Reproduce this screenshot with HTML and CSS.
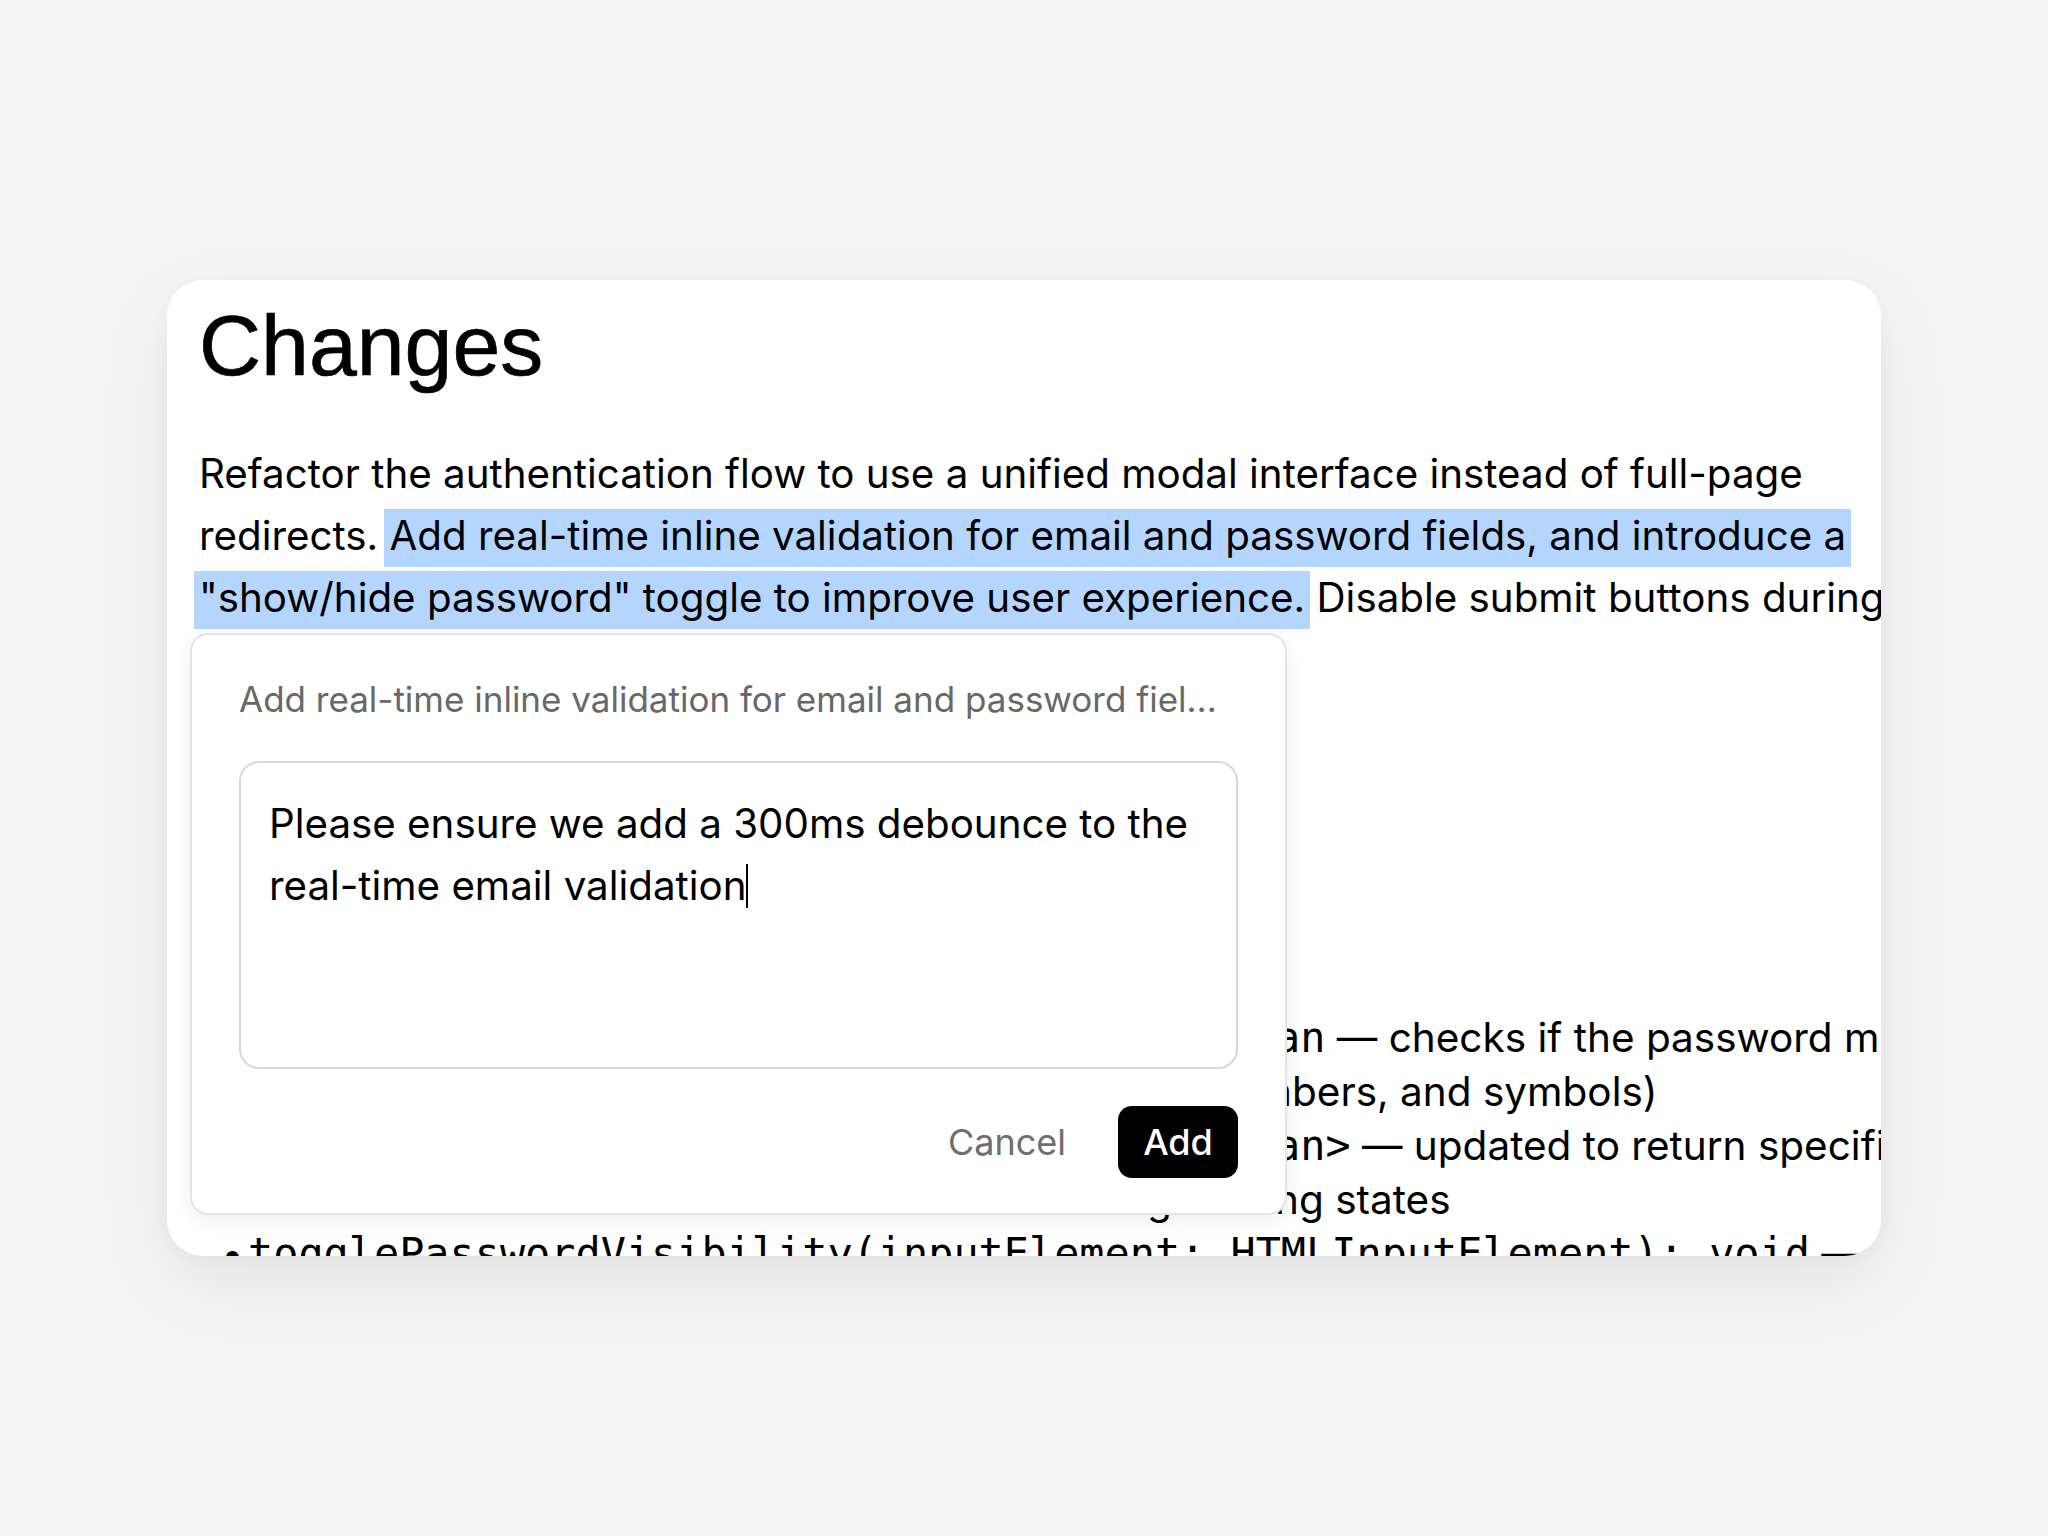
FILE: index.html
```html
<!DOCTYPE html>
<html lang="en">
<head>
<meta charset="utf-8">
<title>Changes</title>
<link rel="stylesheet" href="styles.css">
</head>
<body>
<div class="stage">
  <div class="card">
    <div class="doc">
      <h1 class="title">Changes</h1>
      <p class="para">Refactor the authentication flow to use a unified modal interface instead of full-page redirects. <span class="hl">Add real-time inline validation for email and password fields, and introduce a "show/hide password" toggle to improve user experience.</span> Disable submit buttons during loading.</p>
      <h2 class="sub">Functions</h2>
      <ul class="list">
        <li class="li">
          <div class="li-line"><span class="li-pre"><code class="mono">validatePassword(password: string): boole</code></span><span class="li-rest"><code class="mono">an</code> — checks if the password meets complexity rules</span></div>
          <div class="li-line"><span class="li-pre li-pre-wide">(minimum length, uppercase letters, num</span><span class="li-rest">bers, and symbols)</span></div>
        </li>
        <li class="li">
          <div class="li-line"><span class="li-pre"><code class="mono">validateEmail(email: string): Promise&lt;boole</code></span><span class="li-rest"><code class="mono">an&gt;</code> — updated to return specific error messages</span></div>
          <div class="li-line"><span class="li-pre">for invalid formats and during loadi</span><span class="li-rest">ng states</span></div>
        </li>
        <li class="li">
          <div class="li-line"><span class="li-rest"><code class="mono">togglePasswordVisibility(inputElement: HTMLInputElement): void</code> —</span></div>
          <div class="li-line"><span class="li-rest">shows or hides the password input value</span></div>
        </li>
      </ul>
    </div>

    <div class="popup">
      <div class="popup-quote">Add real-time inline validation for email and password fields, and introduce a "show/hide password" toggle</div>
      <div class="field">Please ensure we add a 300ms debounce to the real-time email validation<span class="caret"></span></div>
      <div class="actions">
        <button class="btn-cancel">Cancel</button>
        <button class="btn-add">Add</button>
      </div>
    </div>
  </div>
</div>
</body>
</html>
```

FILE: styles.css
```css
* { box-sizing: border-box; }

html, body {
  margin: 0;
  padding: 0;
}

body {
  background: #f5f5f5;
  font-family: "Inter", "Noto Sans", sans-serif;
  color: #000;
}

.stage {
  min-height: 100vh;
  display: flex;
  align-items: center;
  justify-content: center;
}

.card {
  position: relative;
  width: 1714px;
  height: 976px;
  background: #fff;
  border-radius: 36px;
  overflow: hidden;
  box-shadow: 0 26px 80px rgba(0, 0, 0, 0.075), 0 4px 16px rgba(0, 0, 0, 0.03);
}

.doc {
  padding: 22px 0 0 32px;
  width: 1760px;
}

.title {
  margin: 0;
  font-family: "Liberation Sans", Arial, sans-serif;
  font-weight: 400;
  font-size: 86px;
  line-height: 86px;
  -webkit-text-stroke: 0.7px #000;
}

.para {
  margin: 55px 0 0 0;
  font-size: 40.3px;
  line-height: 62px;
  width: 1700px;
}

.hl {
  background: #b4d5fe;
  padding: 2px 0 7px 0;
  -webkit-box-decoration-break: clone;
  box-decoration-break: clone;
  box-shadow: 5px 0 0 #b4d5fe, -5px 0 0 #b4d5fe;
}

.sub {
  margin: 40px 0 0 0;
  font-size: 48px;
  font-weight: 600;
  line-height: 60px;
}

.list {
  list-style: none;
  margin: 220px 0 0 0;
  padding: 0 0 0 49px;
  font-size: 40.5px;
  line-height: 54px;
}

.li {
  position: relative;
}

.li::before {
  content: "\2022";
  position: absolute;
  left: -27px;
  top: 1px;
}

.li-line {
  display: flex;
  white-space: nowrap;
}

.li-pre {
  flex: none;
  width: 1027px;
  overflow: hidden;
  text-align: right;
}

.li-pre-wide {
  width: 1044px;
}

.mono {
  font-family: "DejaVu Sans Mono", "Liberation Mono", monospace;
  font-size: 41.85px;
}

.popup {
  position: absolute;
  left: 23px;
  top: 353px;
  width: 1097px;
  height: 582px;
  background: #fff;
  border: 2px solid #e4e4e4;
  border-radius: 18px;
  box-shadow: 0 6px 24px rgba(0, 0, 0, 0.06);
  padding: 40px 47px 0 47px;
  display: flex;
  flex-direction: column;
}

.popup-quote {
  font-size: 35px;
  line-height: 48px;
  color: #686868;
  white-space: nowrap;
  overflow: hidden;
  text-overflow: ellipsis;
  width: 992px;
}

.field {
  margin-top: 38px;
  height: 308px;
  border: 2px solid #d8d8d8;
  border-radius: 20px;
  padding: 30px 28px 0 28px;
  font-size: 40.3px;
  line-height: 62px;
  color: #000;
}

.caret {
  display: inline-block;
  width: 2px;
  height: 44px;
  background: #000;
  vertical-align: -8px;
  margin-left: 0;
}

.actions {
  margin-top: 37px;
  display: flex;
  justify-content: flex-end;
  align-items: center;
  gap: 28px;
}

.btn-cancel {
  font-family: inherit;
  font-size: 36px;
  background: none;
  border: none;
  color: #6e6e6e;
  padding: 0 24px;
  height: 72px;
}

.btn-add {
  font-family: inherit;
  font-size: 36px;
  font-weight: 500;
  background: #000;
  color: #fff;
  border: none;
  border-radius: 14px;
  width: 120px;
  height: 72px;
  padding: 0;
}
```
